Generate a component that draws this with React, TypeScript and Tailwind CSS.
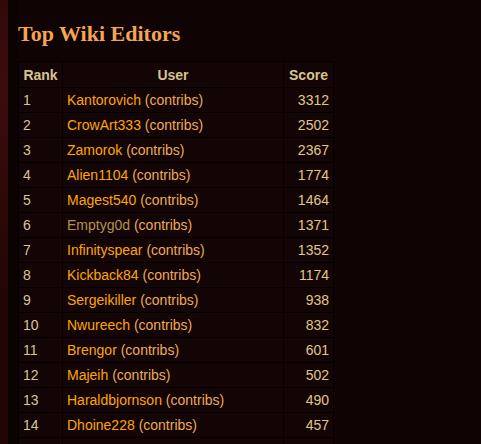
import React from "react";

const rows: [number, string, number, boolean?][] = [
  [1, "Kantorovich", 3312],
  [2, "CrowArt333", 2502],
  [3, "Zamorok", 2367],
  [4, "Alien1104", 1774],
  [5, "Magest540", 1464],
  [6, "Emptyg0d", 1371, true],
  [7, "Infinityspear", 1352],
  [8, "Kickback84", 1174],
  [9, "Sergeikiller", 938],
  [10, "Nwureech", 832],
  [11, "Brengor", 601],
  [12, "Majeih", 502],
  [13, "Haraldbjornson", 490],
  [14, "Dhoine228", 457],
];

export default function App() {
  return (
    <div className="w-[481px] h-[444px] overflow-hidden bg-[#100303] flex" style={{ fontFamily: '"Liberation Sans", Arial, sans-serif' }}>
      <div className="w-[8px] shrink-0 bg-[#2c0808] bg-[radial-gradient(circle_at_30%_20%,#3d0c0c_0,#220505_60%)]" />
      <div className="w-[10px] shrink-0 bg-[#0b0202]" />
      <div className="flex-1 flex flex-col">
        <h2
          className="text-[22px] font-bold text-[#f2a554] leading-[26px] pt-[21px] pb-[5px]"
          style={{ fontFamily: '"Liberation Serif", "Times New Roman", serif' }}
        >
          Top Wiki Editors
        </h2>
        <div className="h-px bg-[#3b2519]" />
        <table className="mt-[9px] border-collapse text-[14px] leading-[16px] bg-[#130505] w-[316px]">
          <thead>
            <tr className="h-[26px]">
              <th className="border border-[#050000] px-[4px] font-bold text-[#d6c48e] text-center w-[44px]">Rank</th>
              <th className="border border-[#050000] px-[4px] font-bold text-[#d6c48e] text-center">User</th>
              <th className="border border-[#050000] px-[4px] font-bold text-[#d6c48e] text-center w-[50px]">Score</th>
            </tr>
          </thead>
          <tbody>
            {rows.map(([rank, name, score, visited]) => (
              <tr key={rank} className="h-[25px]">
                <td className="border border-[#050000] px-[4px] text-[#d8c596]">{rank}</td>
                <td className="border border-[#050000] px-[4px] whitespace-nowrap">
                  <span className={visited ? "text-[#b5914e]" : "text-[#ffa500]"}>{name}</span>{" "}
                  <span className="text-[#eeaa55]">(contribs)</span>
                </td>
                <td className="border border-[#050000] px-[4px] text-right text-[#e0c787]">{score}</td>
              </tr>
            ))}
            <tr className="h-[25px]">
              <td className="border border-[#050000] px-[4px]">&nbsp;</td>
              <td className="border border-[#050000] px-[4px]">&nbsp;</td>
              <td className="border border-[#050000] px-[4px]">&nbsp;</td>
            </tr>
          </tbody>
        </table>
      </div>
    </div>
  );
}
